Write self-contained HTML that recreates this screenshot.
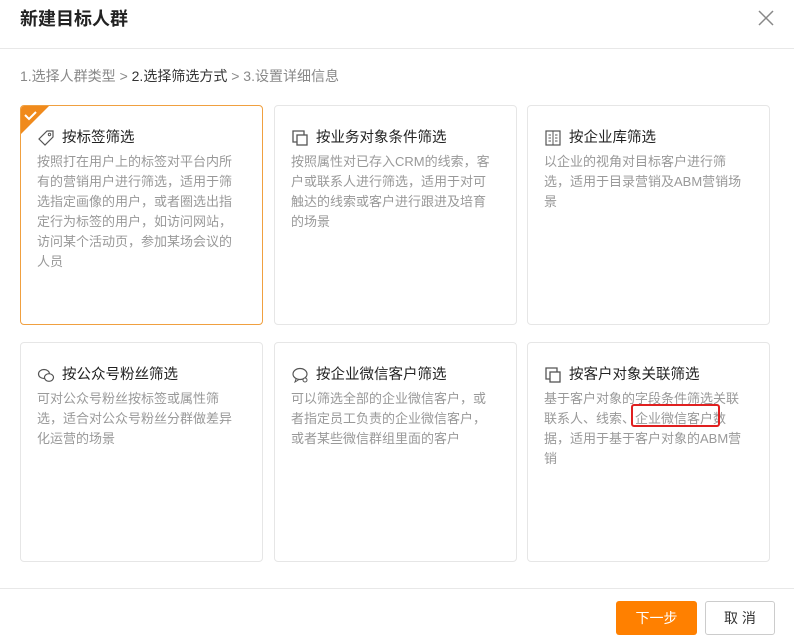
<!DOCTYPE html><html><head><meta charset="utf-8"><style>
body{margin:0;width:794px;height:644px;background:#fff;font-family:"Liberation Sans","Noto Sans CJK SC",sans-serif;position:relative;overflow:hidden}
.h{position:absolute;left:20px;top:6px;font-size:18px;font-weight:bold;color:#222;line-height:26px}
.x{position:absolute;left:757px;top:9px;width:18px;height:18px}
.hl{position:absolute;left:0;right:0;top:48px;border-top:1px solid #e8e8e8}
.st{position:absolute;left:20px;top:66px;font-size:14px;color:#888;line-height:20px}
.st b{font-weight:normal;color:#333}
.c{position:absolute;width:243px;height:220px;border:1px solid #e6e6e6;border-radius:4px;box-sizing:border-box;overflow:hidden}
.c.on{border-color:#f0a040}
.t{position:absolute;left:16px;top:21px;font-size:14.5px;color:#222;line-height:22px;display:flex;align-items:center}
.t svg{margin-right:7px}
.d{position:absolute;left:16px;top:46px;width:199px;font-size:13px;color:#999;line-height:20px}
.fl{position:absolute;left:0;right:0;top:588px;border-top:1px solid #e8e8e8}
.b1{position:absolute;left:616px;top:601px;width:81px;height:34px;background:#ff8000;color:#fff;border-radius:3px;font-size:14px;text-align:center;line-height:34px}
.b2{position:absolute;left:705px;top:601px;width:70px;height:34px;border:1px solid #ccc;box-sizing:border-box;color:#333;border-radius:3px;font-size:14px;text-align:center;line-height:32px}
</style></head><body>
<div class="h">新建目标人群</div>
<svg class="x" viewBox="0 0 18 18"><path d="M2 2L16 16M16 2L2 16" stroke="#888" stroke-width="1.5"/></svg>
<div class="hl"></div>
<div class="st">1.选择人群类型 &gt; <b>2.选择筛选方式</b> &gt; 3.设置详细信息</div>

<div class="c on" style="left:20px;top:105px">
<svg style="position:absolute;left:0;top:0" width="28" height="28"><path d="M0 0H28L0 28Z" fill="#f08a1c"/><path d="M4 9L8 13L15 6" stroke="#fff" stroke-width="2" fill="none"/></svg>
<div class="t"><svg width="18" height="18" viewBox="0 0 18 18"><path d="M10 2H16V8L8 16L2 10Z" fill="none" stroke="#555" stroke-width="1.2"/><circle cx="12.5" cy="5.5" r="1.2" fill="none" stroke="#555"/></svg>按标签筛选</div>
<div class="d">按照打在用户上的标签对平台内所有的营销用户进行筛选，适用于筛选指定画像的用户，或者圈选出指定行为标签的用户，如访问网站，访问某个活动页，参加某场会议的人员</div></div>

<div class="c" style="left:274px;top:105px">
<div class="t"><svg width="18" height="18" viewBox="0 0 18 18"><path d="M6 13H2V2H13V6" fill="none" stroke="#555" stroke-width="1.3"/><rect x="6" y="6" width="10" height="10" fill="none" stroke="#555" stroke-width="1.3"/></svg>按业务对象条件筛选</div>
<div class="d">按照属性对已存入CRM的线索，客户或联系人进行筛选，适用于对可触达的线索或客户进行跟进及培育的场景</div></div>

<div class="c" style="left:527px;top:105px">
<div class="t"><svg width="18" height="18" viewBox="0 0 18 18"><rect x="2" y="2" width="14" height="14" fill="none" stroke="#555" stroke-width="1.2"/><path d="M9 2V16M4.5 6H7M4.5 9H7M4.5 12H7M11 6H13.5M11 9H13.5M11 12H13.5" stroke="#555"/></svg>按企业库筛选</div>
<div class="d">以企业的视角对目标客户进行筛选，适用于目录营销及ABM营销场景</div></div>

<div class="c" style="left:20px;top:342px">
<div class="t"><svg width="18" height="18" viewBox="0 0 18 18"><ellipse cx="7" cy="8" rx="5.5" ry="4.5" fill="none" stroke="#555" stroke-width="1.2"/><ellipse cx="12" cy="11.5" rx="4.5" ry="3.8" fill="#fff" stroke="#555" stroke-width="1.2"/></svg>按公众号粉丝筛选</div>
<div class="d">可对公众号粉丝按标签或属性筛选，适合对公众号粉丝分群做差异化运营的场景</div></div>

<div class="c" style="left:274px;top:342px">
<div class="t"><svg width="18" height="18" viewBox="0 0 18 18"><ellipse cx="9" cy="8" rx="7" ry="5.5" fill="none" stroke="#555" stroke-width="1.2"/><path d="M5 13L4 16L8 13.5" fill="none" stroke="#555"/><circle cx="14" cy="14" r="2" fill="#fff" stroke="#555"/></svg>按企业微信客户筛选</div>
<div class="d">可以筛选全部的企业微信客户，或者指定员工负责的企业微信客户，或者某些微信群组里面的客户</div></div>

<div class="c" style="left:527px;top:342px">
<div class="t"><svg width="18" height="18" viewBox="0 0 18 18"><path d="M6 13H2V2H13V6" fill="none" stroke="#555" stroke-width="1.3"/><rect x="6" y="6" width="10" height="10" fill="none" stroke="#555" stroke-width="1.3"/></svg>按客户对象关联筛选</div>
<div class="d">基于客户对象的字段条件筛选关联联系人、线索、企业微信客户数据，适用于基于客户对象的ABM营销</div></div>
<div style="position:absolute;left:631px;top:404px;width:89px;height:23px;border:2px solid #e02020;border-radius:3px;box-sizing:border-box"></div>

<div class="fl"></div>
<div class="b1">下一步</div>
<div class="b2">取 消</div>
</body></html>
